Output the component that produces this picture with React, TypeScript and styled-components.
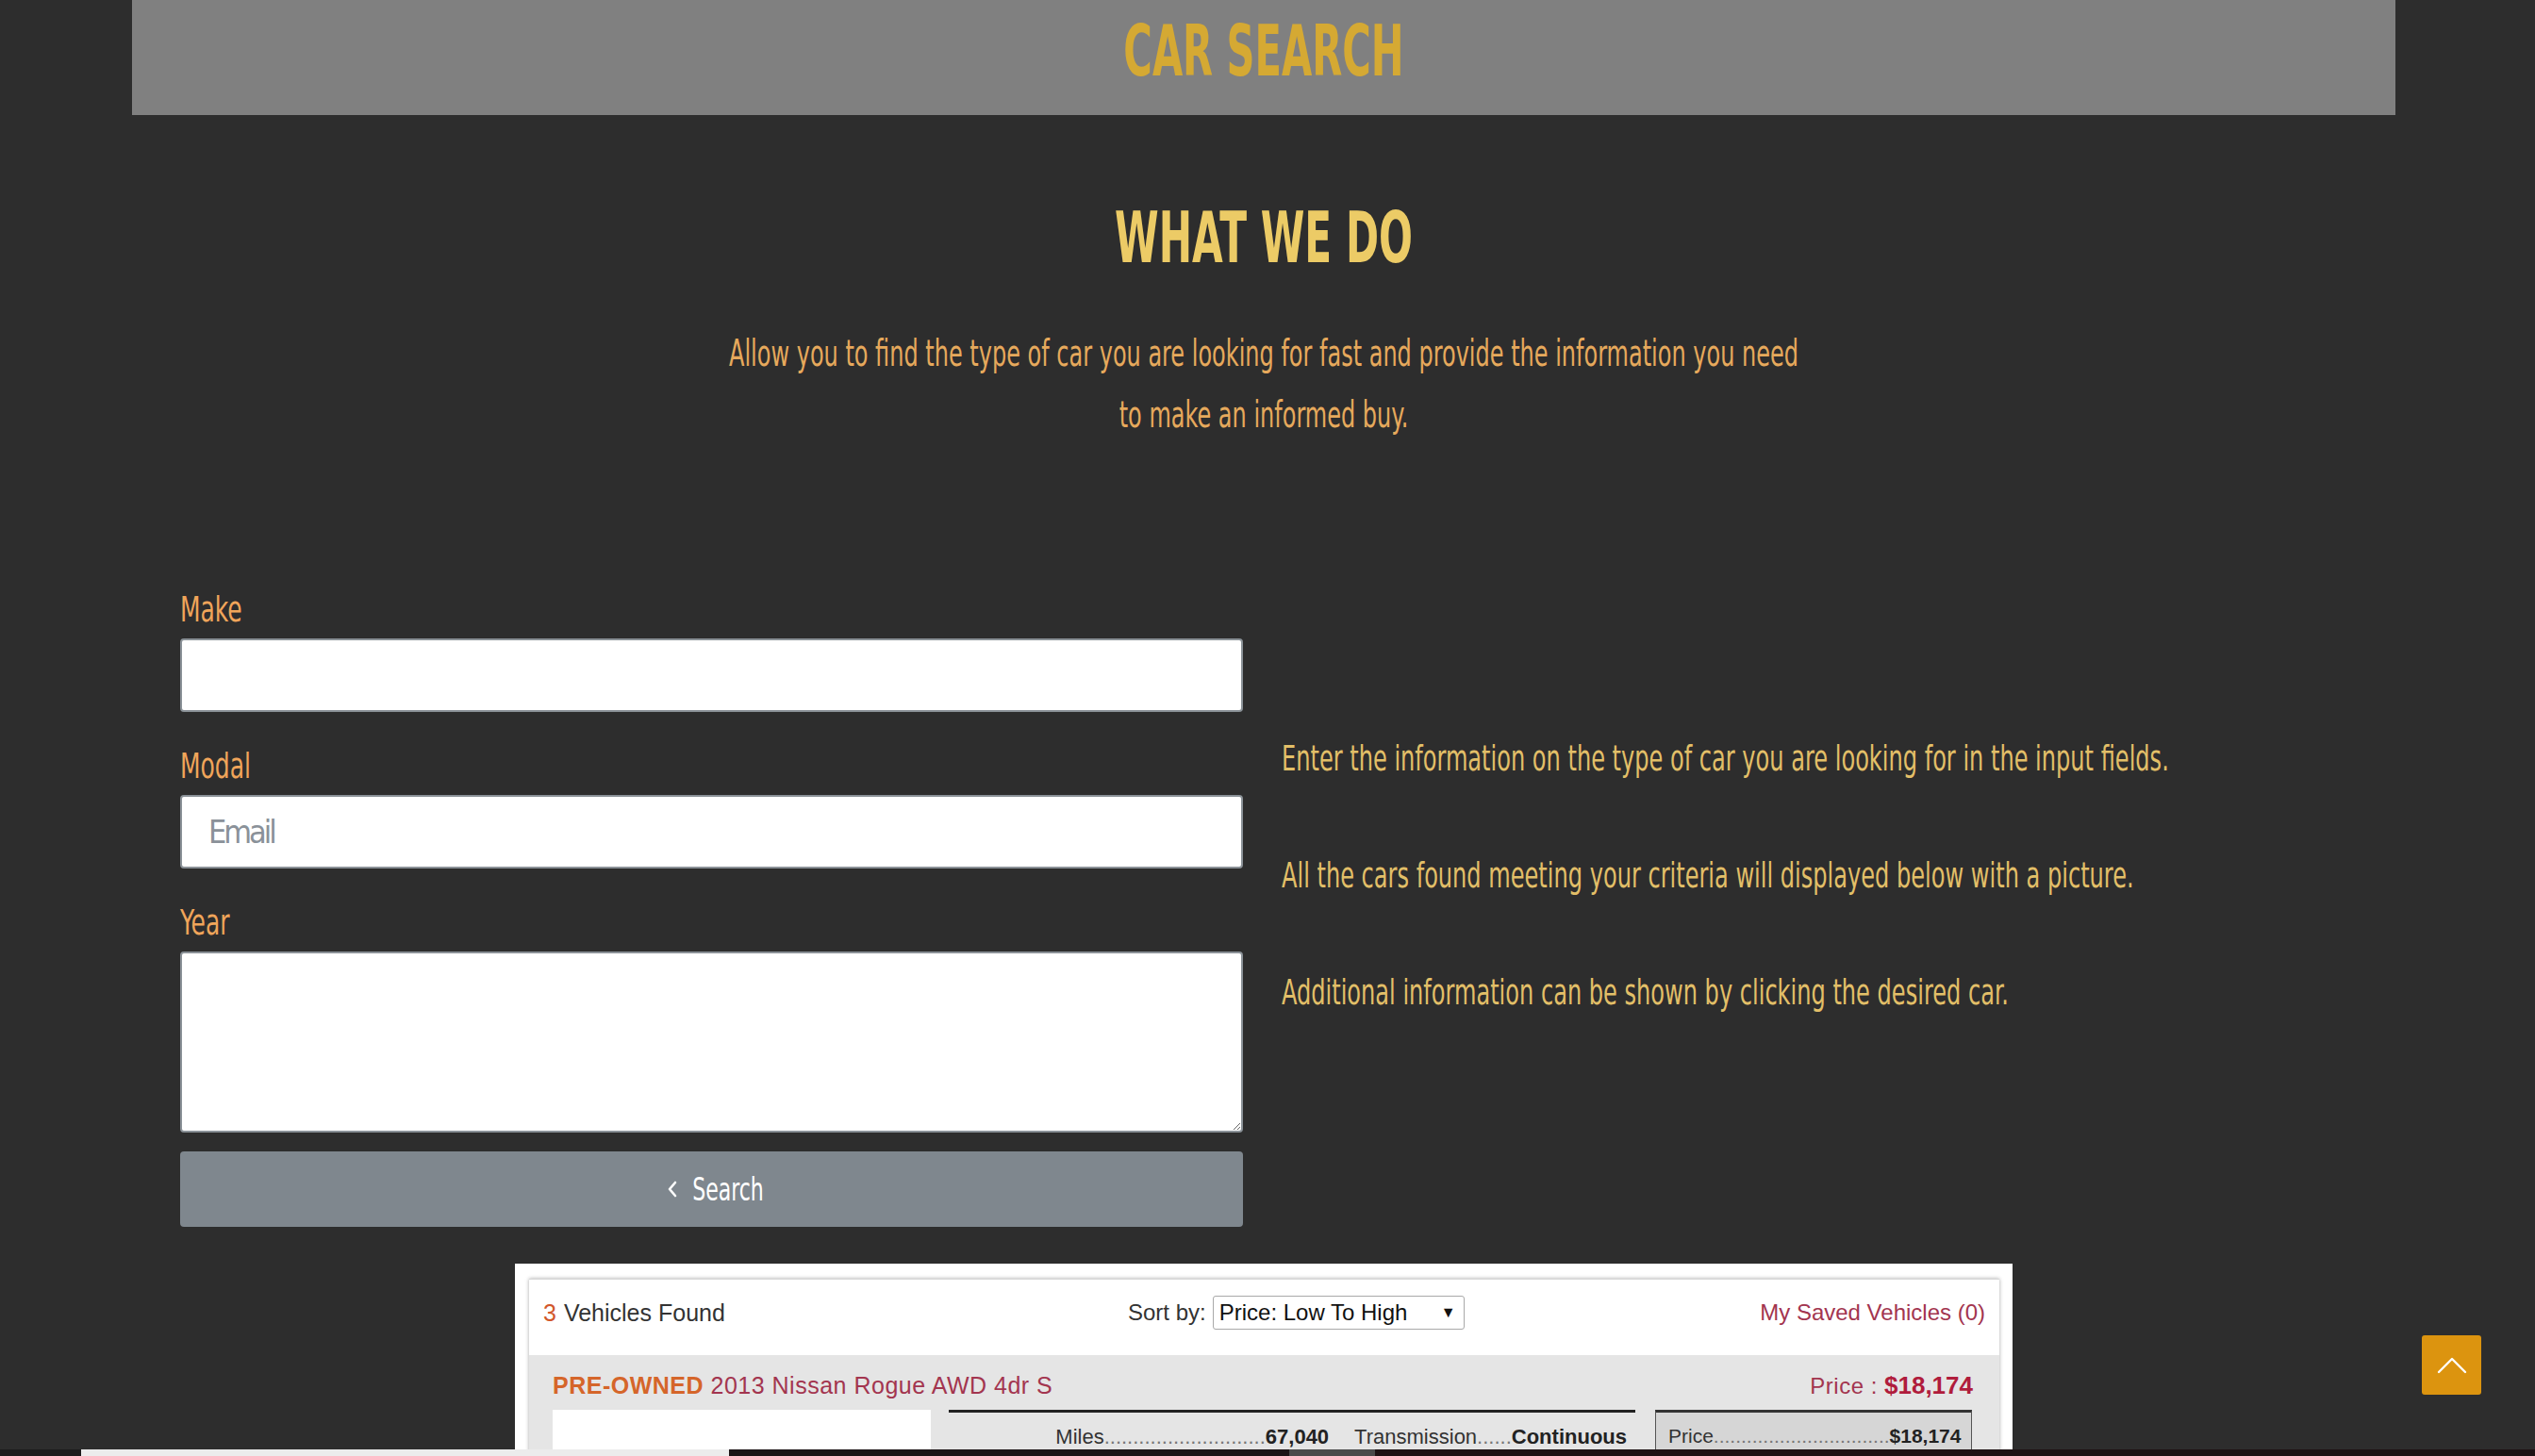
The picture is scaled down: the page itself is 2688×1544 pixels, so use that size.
import React from "react";
import styled, { createGlobalStyle } from "styled-components";

const CONDENSED = `"DejaVu Sans Condensed", "Liberation Sans", sans-serif`;
const SANS = `"Liberation Sans", Arial, sans-serif`;

const Global = createGlobalStyle`
  html, body { margin: 0; padding: 0; background: #2d2d2d; overflow: hidden; }
  body { font-family: ${SANS}; }
  * { box-sizing: border-box; }
`;

const Page = styled.div`
  width: 2400px;
  margin-left: 140px;
`;

const HeaderBar = styled.header`
  height: 122px;
  background: #808080;
  padding-top: 17px;
`;

const Heading = styled.h1<{ $color: string; $sx: number; $top?: number }>`
  margin: ${(p) => p.$top ?? 0}px 0 0;
  font-family: ${CONDENSED};
  font-weight: 700;
  font-size: 74px;
  line-height: 74px;
  text-align: center;
  color: ${(p) => p.$color};
  transform: scaleX(${(p) => p.$sx});
  transform-origin: center;
`;

const Intro = styled.p`
  margin: 53px 0 0;
  font-family: ${CONDENSED};
  font-size: 39px;
  line-height: 65px;
  text-align: center;
  color: #e6a95c;
  transform: scaleX(0.684);
  transform-origin: center;
`;

const FormSection = styled.section`
  margin-top: 151px;
  padding-left: 51px;
  display: grid;
  grid-template-columns: 1127px 1fr;
  column-gap: 41px;
`;

const FormColumn = styled.div`
  display: flex;
  flex-direction: column;
`;

const Field = styled.div`
  display: flex;
  flex-direction: column;
  gap: 8px;
  margin-bottom: 34px;
  &:last-of-type { margin-bottom: 0; }
`;

const Label = styled.label`
  font-family: ${CONDENSED};
  font-size: 38px;
  line-height: 46px;
  color: #f0a55a;
  transform: scaleX(0.73);
  transform-origin: left center;
  white-space: nowrap;
`;

const inputBase = `
  width: 100%;
  background: #ffffff;
  border: 2px solid #8a9197;
  border-radius: 4px;
  font-family: ${CONDENSED};
  font-size: 34px;
  color: #333;
  padding: 0 28px;
  outline: none;
`;

const TextInput = styled.input`
  ${inputBase}
  height: 78px;
  &::placeholder { color: #8a9199; letter-spacing: -3px; }
`;

const TextArea = styled.textarea`
  ${inputBase}
  height: 192px;
  display: block;
  padding-top: 14px;
`;

const SearchButton = styled.button`
  margin-top: 20px;
  height: 80px;
  width: 100%;
  border: none;
  border-radius: 4px;
  background: #7f878e;
  color: #ffffff;
  display: flex;
  align-items: center;
  justify-content: center;
  gap: 4px;
  cursor: pointer;
`;

const ButtonLabel = styled.span`
  font-family: ${CONDENSED};
  font-size: 34px;
  width: 80px;
  text-align: center;
  transform: scaleX(0.72);
  transform-origin: center;
  white-space: nowrap;
`;

const InfoColumn = styled.div`
  padding-top: 158px;
`;

const InfoText = styled.p`
  margin: 0 0 78px;
  font-family: ${CONDENSED};
  font-size: 38px;
  line-height: 46px;
  color: #e2bf68;
  white-space: nowrap;
  transform: scaleX(0.704);
  transform-origin: left center;
`;

/* ---- screenshot of the results listing ---- */

const Listing = styled.figure`
  width: 1588px;
  margin: 39px auto 0;
  background: #ffffff;
  padding: 16px 14px 0 15px;
  height: 420px;
`;

const ListingPanel = styled.div`
  box-shadow: 0 0 4px rgba(0, 0, 0, 0.35);
  border-top: 1px solid #d8d8d8;
  height: 100%;
  font-family: ${SANS};
`;

const ListingHeader = styled.div`
  height: 80px;
  padding: 0 15px 10px;
  display: grid;
  grid-template-columns: 620px auto 1fr;
  align-items: center;
  font-size: 24px;
  color: #333;
`;

const Found = styled.span`
  font-size: 25px;
`;

const Count = styled.span`
  color: #d2572a;
  margin-right: 8px;
`;

const SortGroup = styled.div`
  display: flex;
  align-items: center;
  gap: 7px;
`;

const SortSelect = styled.div`
  height: 36px;
  border: 1px solid #a9a9a9;
  border-radius: 3px;
  width: 267px;
  display: flex;
  align-items: center;
  justify-content: space-between;
  padding: 0 8px 0 6px;
  color: #111;
  font-size: 24px;
`;

const Caret = styled.span`
  font-size: 16px;
`;

const SavedLink = styled.span`
  justify-self: end;
  color: #a3354f;
`;

const ListingBody = styled.div`
  background: #e5e5e5;
  padding: 17px 28px 0 25px;
  height: calc(100% - 80px);
`;

const TitleRow = styled.div`
  display: flex;
  justify-content: space-between;
  align-items: baseline;
  font-size: 25px;
  line-height: 30px;
`;

const Title = styled.span`
  color: #a3354f;
  letter-spacing: 0.5px;
`;

const PreOwned = styled.span`
  color: #d5652a;
  font-weight: 700;
`;

const PriceLabel = styled.span`
  color: #a3354f;
  font-size: 24px;
  letter-spacing: 0.5px;
`;

const PriceValue = styled.span`
  color: #b01c3c;
  font-weight: 700;
  font-size: 26px;
`;

const DetailRow = styled.div`
  margin-top: 10px;
  display: grid;
  grid-template-columns: 401px 728px 338px;
  column-gap: 19px;
  font-size: 22px;
  color: #333;
`;

const PhotoBox = styled.div`
  background: #ffffff;
  height: 260px;
`;

const SpecsBox = styled.div`
  border-top: 3px solid #222;
  padding: 13px 9px 0 0;
  display: flex;
  justify-content: flex-end;
  gap: 27px;
  white-space: nowrap;
`;

const PriceBox = styled.div`
  margin-left: 2px;
  border-top: 3px solid #333;
  border-left: 1px solid #555;
  border-right: 1px solid #555;
  background: #d6d6d6;
  padding: 13px 11px 0 13px;
  white-space: nowrap;
  height: 200px;
  font-size: 21px;
`;

const Dots = styled.span`
  color: #777;
`;

const Strong = styled.b`
  font-weight: 700;
  color: #222;
`;

/* ---- overlays ---- */

const ScrollTop = styled.button`
  position: fixed;
  right: 57px;
  bottom: 65px;
  width: 63px;
  height: 63px;
  border: none;
  border-radius: 3px;
  background: #dc940f;
  display: flex;
  align-items: center;
  justify-content: center;
  padding: 0;
`;

const BottomStrip = styled.div`
  position: fixed;
  left: 0;
  right: 0;
  bottom: 0;
  height: 7px;
  display: flex;
`;

const StripPart = styled.div<{ $w?: number; $bg: string }>`
  background: ${(p) => p.$bg};
  ${(p) => (p.$w ? `width: ${p.$w}px;` : "flex: 1;")}
`;

export default function App() {
  return (
    <>
      <Global />
      <Page>
        <HeaderBar>
          <Heading $color="#d5a933" $sx={0.625}>CAR SEARCH</Heading>
        </HeaderBar>

        <Heading $color="#eccb66" $sx={0.635} $top={93}>WHAT WE DO</Heading>
        <Intro>
          Allow you to find the type of car you are looking for fast and provide the information you need
          <br />
          to make an informed buy.
        </Intro>

        <FormSection>
          <FormColumn>
            <Field>
              <Label htmlFor="make">Make</Label>
              <TextInput id="make" type="text" />
            </Field>
            <Field>
              <Label htmlFor="modal">Modal</Label>
              <TextInput id="modal" type="email" placeholder="Email" />
            </Field>
            <Field>
              <Label htmlFor="year">Year</Label>
              <TextArea id="year" />
            </Field>
            <SearchButton type="button">
              <svg width="12" height="20" viewBox="0 0 12 20" fill="none">
                <path d="M9 3 L3 10 L9 17" stroke="#ffffff" strokeWidth="2.6" strokeLinecap="round" strokeLinejoin="round" />
              </svg>
              <ButtonLabel>Search</ButtonLabel>
            </SearchButton>
          </FormColumn>

          <InfoColumn>
            <InfoText>Enter the information on the type of car you are looking for in the input fields.</InfoText>
            <InfoText>All the cars found meeting your criteria will displayed below with a picture.</InfoText>
            <InfoText>Additional information can be shown by clicking the desired car.</InfoText>
          </InfoColumn>
        </FormSection>

        <Listing>
          <ListingPanel>
            <ListingHeader>
              <Found>
                <Count>3</Count>Vehicles Found
              </Found>
              <SortGroup>
                <span>Sort by:</span>
                <SortSelect>
                  <span>Price: Low To High</span>
                  <Caret>▼</Caret>
                </SortSelect>
              </SortGroup>
              <SavedLink>My Saved Vehicles (0)</SavedLink>
            </ListingHeader>
            <ListingBody>
              <TitleRow>
                <Title>
                  <PreOwned>PRE-OWNED</PreOwned> 2013 Nissan Rogue AWD 4dr S
                </Title>
                <span>
                  <PriceLabel>Price : </PriceLabel>
                  <PriceValue>$18,174</PriceValue>
                </span>
              </TitleRow>
              <DetailRow>
                <PhotoBox />
                <SpecsBox>
                  <span>
                    Miles<Dots>............................</Dots>
                    <Strong>67,040</Strong>
                  </span>
                  <span>
                    Transmission<Dots>......</Dots>
                    <Strong>Continuous</Strong>
                  </span>
                </SpecsBox>
                <PriceBox>
                  Price<Dots>................................</Dots>
                  <Strong>$18,174</Strong>
                </PriceBox>
              </DetailRow>
            </ListingBody>
          </ListingPanel>
        </Listing>
      </Page>

      <ScrollTop type="button" aria-label="Back to top">
        <svg width="32" height="18" viewBox="0 0 32 18" fill="none">
          <path d="M2 16 L16 2 L30 16" stroke="#ffffff" strokeWidth="2.4" strokeLinecap="round" strokeLinejoin="round" />
        </svg>
      </ScrollTop>

      <BottomStrip>
        <StripPart $w={86} $bg="#1b1b1b" />
        <StripPart $w={687} $bg="#ececec" />
        <StripPart $w={594} $bg="#1c1416" />
        <StripPart $w={91} $bg="#4a4a4a" />
        <StripPart $bg="#1e1214" />
      </BottomStrip>
    </>
  );
}
